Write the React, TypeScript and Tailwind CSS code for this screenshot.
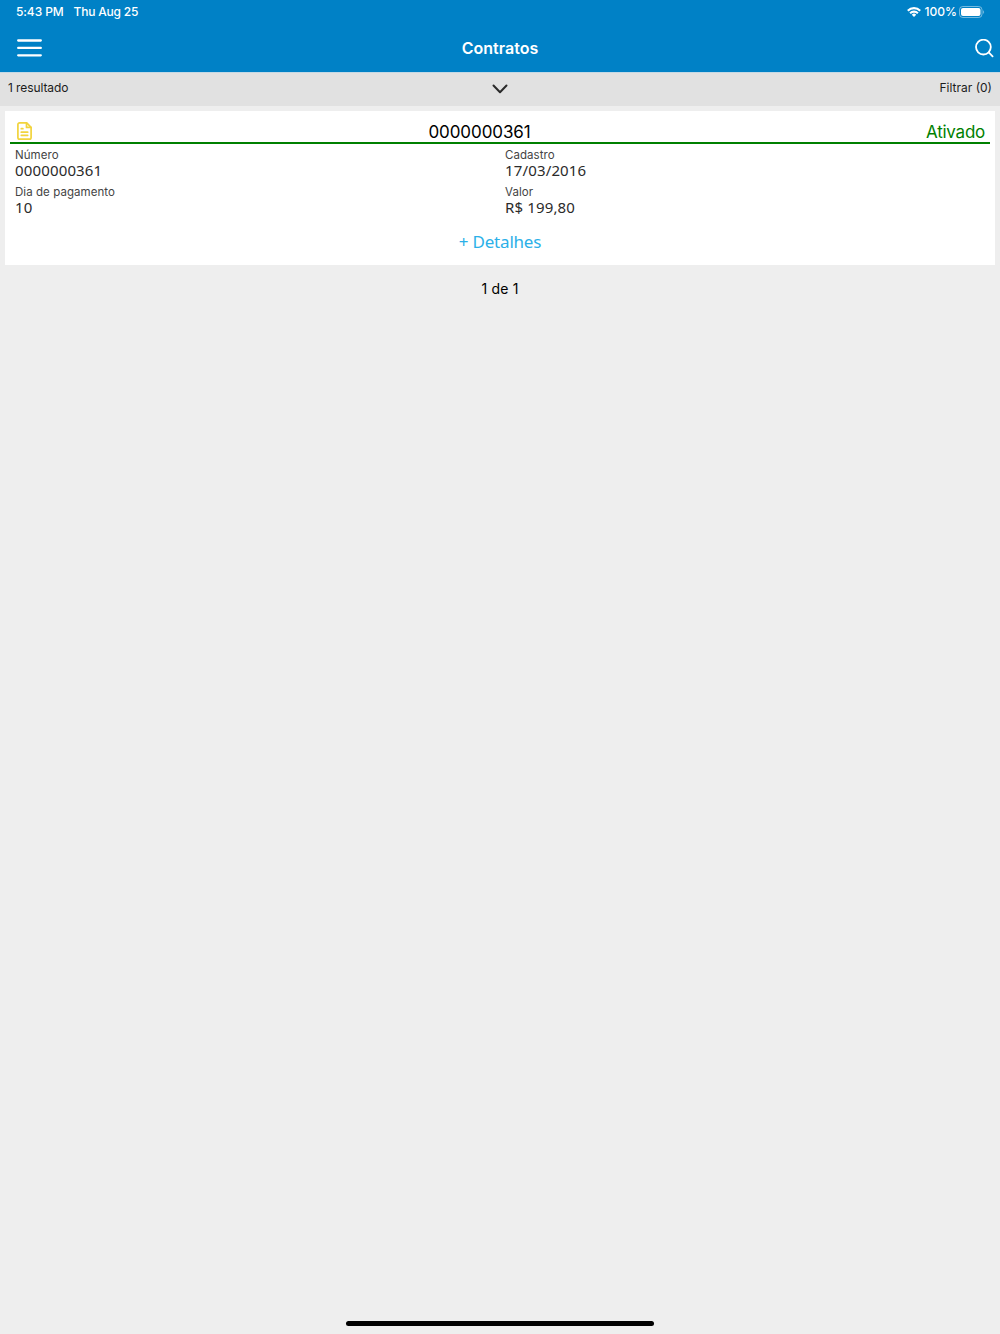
interface Field {
  label: string;
  value: string;
}

interface Contract {
  number: string;
  status: string;
  fields: Field[];
}

const contracts: Contract[] = [
  {
    number: "0000000361",
    status: "Ativado",
    fields: [
      { label: "Número", value: "0000000361" },
      { label: "Cadastro", value: "17/03/2016" },
      { label: "Dia de pagamento", value: "10" },
      { label: "Valor", value: "R$ 199,80" },
    ],
  },
];

function StatusBar() {
  return (
    <div className="flex h-6 items-center justify-between pl-4 pr-[15px] text-[12px] font-medium leading-6">
      <div className="flex gap-[10px]">
        <span className="w-[47.5px] whitespace-nowrap tracking-[-0.1px]">5:43 PM</span>
        <span className="tracking-[-0.2px]">Thu Aug 25</span>
      </div>
      <div className="flex items-center">
        <svg className="mr-1 h-[10px] w-[14px]" viewBox="0 0 14 10" fill="none" stroke="white" strokeWidth="2.1">
          <path d="M0.8 3.7a8.8 8.8 0 0 1 12.4 0" />
          <path d="M3.1 6.2a5.5 5.5 0 0 1 7.8 0" />
          <path d="M7 9.9L4.8 7.7a3.1 3.1 0 0 1 4.4 0z" fill="white" stroke="none" />
        </svg>
        <span>100%</span>
        <svg className="ml-[2px] h-3 w-[26px]" viewBox="0 0 26 12">
          <rect x="0.5" y="0.5" width="22.5" height="11" rx="3.3" fill="none" stroke="white" strokeOpacity="0.45" />
          <rect x="2" y="2" width="19.5" height="8" rx="2" fill="white" />
          <path d="M24.2 4.2c1.2.5 1.2 3.1 0 3.6z" fill="white" fillOpacity="0.5" />
        </svg>
      </div>
    </div>
  );
}

function Header() {
  return (
    <header className="h-[72px] bg-[#0081c6] text-white">
      <StatusBar />
      <div className="grid h-12 grid-cols-[1fr_auto_1fr] items-center">
        <svg className="ml-[17px] h-[18px] w-[25px]" viewBox="0 0 25 18" stroke="white" strokeWidth="2.3" strokeLinecap="round">
          <path d="M1.2 1.5h22.6M1.2 8.9h22.6M1.2 16.3h22.6" />
        </svg>
        <h1 className="text-[16px] font-semibold leading-6">Contratos</h1>
        <svg className="mr-[6px] h-[19px] w-[19px] justify-self-end" viewBox="0 0 19 19" fill="none" stroke="white" strokeWidth="1.8" strokeLinecap="round">
          <circle cx="8.4" cy="8.1" r="7.4" />
          <path d="M13.7 13.4l3.9 3.9" />
        </svg>
      </div>
    </header>
  );
}

function FilterBar() {
  return (
    <div className="grid h-[34px] grid-cols-3 items-center border-t border-[#c4d9e5] bg-[#e1e1e1] px-2 pb-[3px] text-[12px] text-[#1c1c1c]">
      <span className="tracking-[-0.1px]">1 resultado</span>
      <svg className="mt-[2px] h-[10px] w-4 justify-self-center" viewBox="0 0 16 10" fill="none" stroke="#2a2a2a" strokeWidth="2" strokeLinecap="round" strokeLinejoin="round">
        <path d="M1.5 1.5L8 8.2l6.5-6.7" />
      </svg>
      <span className="justify-self-end">Filtrar (0)</span>
    </div>
  );
}

function ContractCard({ contract }: { contract: Contract }) {
  return (
    <div className="mx-[5px] mt-[5px] h-[154px] bg-white px-[5px] pt-[9px]">
      <div className="flex h-6 items-center justify-between border-b-2 border-[#008000] pl-[7px] pr-[5px]">
        <svg className="h-[18px] w-[15px]" viewBox="0 0 15 18" fill="none" stroke="#f2d43d" strokeWidth="1.7" strokeLinecap="round" strokeLinejoin="round">
          <path d="M9.7 0.9H2.6A1.7 1.7 0 0 0 0.9 2.6v12.8a1.7 1.7 0 0 0 1.7 1.7h9.8a1.7 1.7 0 0 0 1.7-1.7V5.3L9.7 0.9z" />
          <path d="M9.5 1.2v4.2h4.3" />
          <path d="M4.3 6.7h1.6M4.3 10.2h6.4M4.3 13.3h6.4" />
        </svg>
        <span className="pl-[1px] pt-[3px] text-[17px] tracking-[-0.08px] text-black">{contract.number}</span>
        <span className="pt-[3px] text-[17px] tracking-[-0.25px] text-[#008000]">{contract.status}</span>
      </div>
      <div className="grid grid-cols-2 pt-1">
        {contract.fields.map((field) => (
          <div key={field.label} className="h-[37px] px-[5px]">
            <p className="text-[11.5px] leading-[14px] tracking-[0.06px] text-[#444]">{field.label}</p>
            <p className="font-['Noto_Sans',sans-serif] text-[15px] leading-4 tracking-[0.15px] text-[#2b2b2b]">
              {field.value}
            </p>
          </div>
        ))}
      </div>
      <button className="mt-2 block w-full font-['Noto_Sans',sans-serif] text-[17px] leading-6 tracking-[-0.2px] text-[#2bb0e8]">
        + Detalhes
      </button>
    </div>
  );
}

export default function App() {
  return (
    <div className="flex h-[1334px] w-[1000px] flex-col overflow-hidden bg-[#eeeeee] font-[Inter,'Liberation_Sans',sans-serif]">
      <Header />
      <FilterBar />
      <main className="flex-1">
        {contracts.map((contract) => (
          <ContractCard key={contract.number} contract={contract} />
        ))}
        <p className="mt-3 text-center text-[14px] leading-6 tracking-[0.2px] text-black">1 de {contracts.length}</p>
      </main>
      <div className="mx-auto mb-2 h-[5px] w-[308px] rounded-full bg-black" />
    </div>
  );
}
